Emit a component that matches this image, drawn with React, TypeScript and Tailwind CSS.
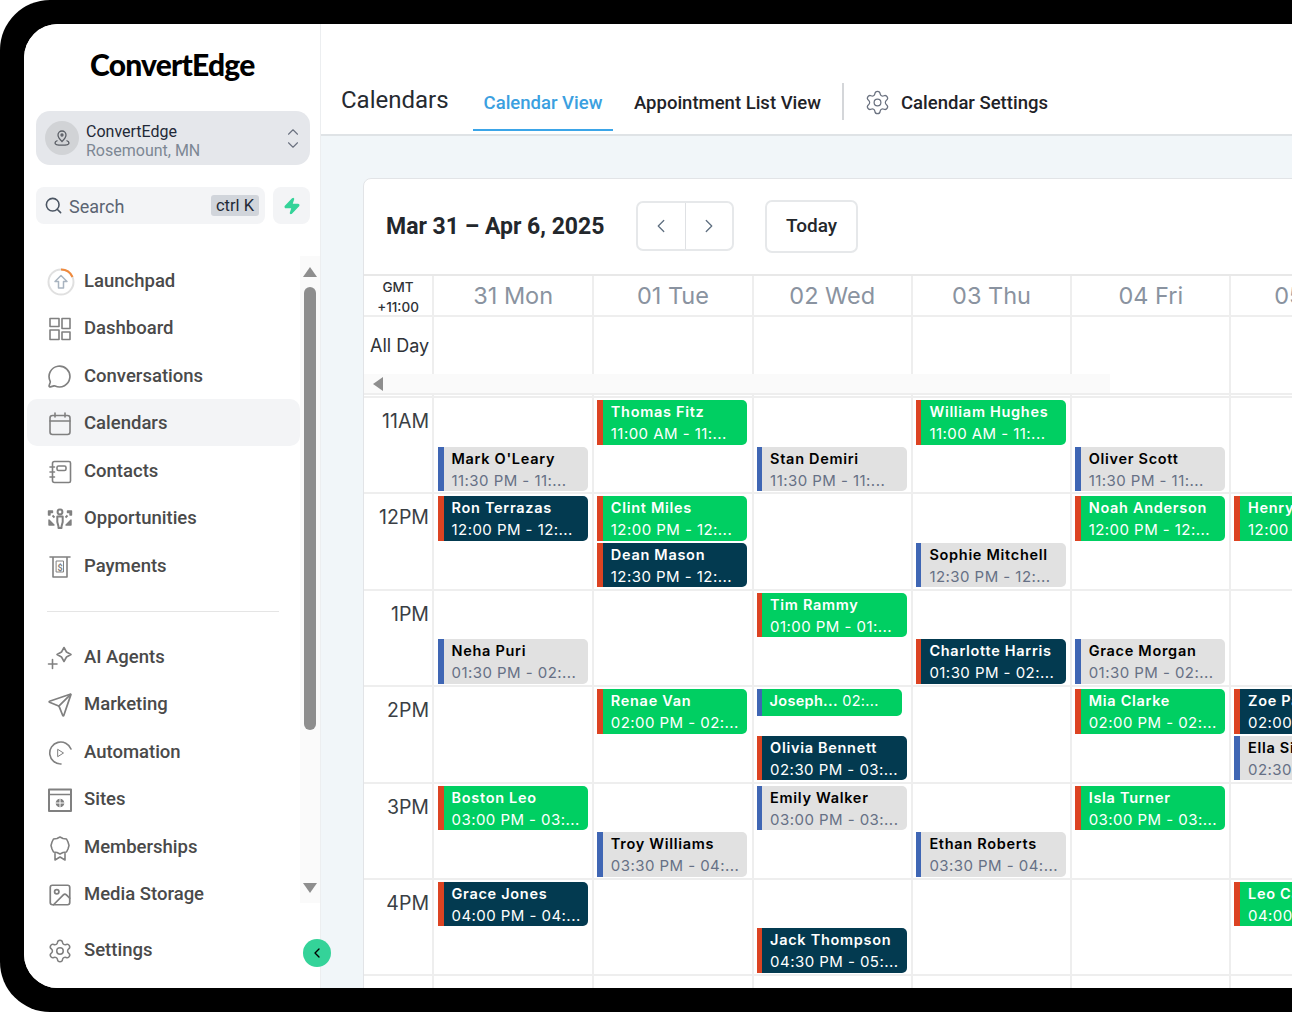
import React from "react";
import { ChevronLeft, ChevronRight, ChevronUp, ChevronDown, Search, Zap, Settings, MessageCircle, Send, Image as ImageIcon } from "lucide-react";

type Kind = "green" | "dark" | "gray" | "short";

type Appt = { row: number; col: number; slot: number; name: string; time: string; kind: Kind };

const days = ["31 Mon", "01 Tue", "02 Wed", "03 Thu", "04 Fri", "05 Sat"];
const hours = ["11AM", "12PM", "1PM", "2PM", "3PM", "4PM"];

// same column widths for every band of the calendar
const GRID = "grid grid-cols-[70px_160.3px_repeat(5,159.3px)]";

const appts: Appt[] = [
  { row: 0, col: 0, slot: 1, name: "Mark O'Leary", time: "11:30 PM - 11:...", kind: "gray" },
  { row: 0, col: 1, slot: 0, name: "Thomas Fitz", time: "11:00 AM - 11:...", kind: "green" },
  { row: 0, col: 2, slot: 1, name: "Stan Demiri", time: "11:30 PM - 11:...", kind: "gray" },
  { row: 0, col: 3, slot: 0, name: "William Hughes", time: "11:00 AM - 11:...", kind: "green" },
  { row: 0, col: 4, slot: 1, name: "Oliver Scott", time: "11:30 PM - 11:...", kind: "gray" },
  { row: 1, col: 0, slot: 0, name: "Ron Terrazas", time: "12:00 PM - 12:...", kind: "dark" },
  { row: 1, col: 1, slot: 0, name: "Clint Miles", time: "12:00 PM - 12:...", kind: "green" },
  { row: 1, col: 1, slot: 1, name: "Dean Mason", time: "12:30 PM - 12:...", kind: "dark" },
  { row: 1, col: 3, slot: 1, name: "Sophie Mitchell", time: "12:30 PM - 12:...", kind: "gray" },
  { row: 1, col: 4, slot: 0, name: "Noah Anderson", time: "12:00 PM - 12:...", kind: "green" },
  { row: 1, col: 5, slot: 0, name: "Henry Scott", time: "12:00 PM - 12:...", kind: "green" },
  { row: 2, col: 0, slot: 1, name: "Neha Puri", time: "01:30 PM - 02:...", kind: "gray" },
  { row: 2, col: 2, slot: 0, name: "Tim Rammy", time: "01:00 PM - 01:...", kind: "green" },
  { row: 2, col: 3, slot: 1, name: "Charlotte Harris", time: "01:30 PM - 02:...", kind: "dark" },
  { row: 2, col: 4, slot: 1, name: "Grace Morgan", time: "01:30 PM - 02:...", kind: "gray" },
  { row: 3, col: 1, slot: 0, name: "Renae Van", time: "02:00 PM - 02:...", kind: "green" },
  { row: 3, col: 2, slot: 0, name: "Joseph...", time: "02:...", kind: "short" },
  { row: 3, col: 2, slot: 1, name: "Olivia Bennett", time: "02:30 PM - 03:...", kind: "dark" },
  { row: 3, col: 4, slot: 0, name: "Mia Clarke", time: "02:00 PM - 02:...", kind: "green" },
  { row: 3, col: 5, slot: 0, name: "Zoe Parker", time: "02:00 PM - 02:...", kind: "dark" },
  { row: 3, col: 5, slot: 1, name: "Ella Simmons", time: "02:30 PM - 03:...", kind: "gray" },
  { row: 4, col: 0, slot: 0, name: "Boston Leo", time: "03:00 PM - 03:...", kind: "green" },
  { row: 4, col: 1, slot: 1, name: "Troy Williams", time: "03:30 PM - 04:...", kind: "gray" },
  { row: 4, col: 2, slot: 0, name: "Emily Walker", time: "03:00 PM - 03:...", kind: "gray" },
  { row: 4, col: 3, slot: 1, name: "Ethan Roberts", time: "03:30 PM - 04:...", kind: "gray" },
  { row: 4, col: 4, slot: 0, name: "Isla Turner", time: "03:00 PM - 03:...", kind: "green" },
  { row: 5, col: 0, slot: 0, name: "Grace Jones", time: "04:00 PM - 04:...", kind: "dark" },
  { row: 5, col: 2, slot: 1, name: "Jack Thompson", time: "04:30 PM - 05:...", kind: "dark" },
  { row: 5, col: 5, slot: 0, name: "Leo Carter", time: "04:00 PM - 04:...", kind: "green" },
];

const cardStyles: Record<Exclude<Kind, "short">, { box: string; bar: string; name: string; time: string }> = {
  green: { box: "bg-[#00cf62]", bar: "bg-[#dc4322]", name: "text-white", time: "text-white" },
  dark: { box: "bg-[#033a50]", bar: "bg-[#dc4322]", name: "text-white", time: "text-white" },
  gray: { box: "bg-[#e1e1e1]", bar: "bg-[#3f66b4]", name: "text-black", time: "text-[#667085]" },
};

function Ico({ children }: { children: React.ReactNode }) {
  return (
    <svg width="26" height="26" viewBox="0 0 26 26" fill="none" stroke="#808080" strokeWidth="1.6" strokeLinecap="round" strokeLinejoin="round">
      {children}
    </svg>
  );
}

const LaunchpadIcon = () => (
  <svg width="28" height="28" viewBox="0 0 28 28" fill="none">
    <circle cx="14" cy="14" r="12.5" stroke="#e0e0e0" strokeWidth="2" />
    <path d="M14 1.5A12.5 12.5 0 0 1 25.5 9" stroke="#f08a3c" strokeWidth="2" />
    <path d="M14 7.5L8 13.5h3.5V20h5v-6.5H20z" stroke="#a9b4c0" strokeWidth="1.5" strokeLinejoin="round" />
  </svg>
);

const DashboardIcon = () => (
  <Ico>
    <rect x="3" y="2.5" width="9" height="8" />
    <rect x="15" y="2.5" width="8" height="10" />
    <rect x="3" y="14" width="9" height="9.5" />
    <rect x="15" y="16" width="8" height="7.5" />
  </Ico>
);

const CalendarIcon = () => (
  <Ico>
    <rect x="3" y="4.5" width="20" height="19" rx="2.5" />
    <path d="M3 10h20M8 2v4M18 2v4" />
  </Ico>
);

const ContactsIcon = () => (
  <Ico>
    <path d="M5.5 4.5a2 2 0 0 1 2-2H22a1.5 1.5 0 0 1 1.5 1.5v18a1.5 1.5 0 0 1-1.5 1.5H7.5a2 2 0 0 1-2-2z" />
    <rect x="10" y="7" width="9" height="4.5" rx="1.5" />
    <path d="M3 8h4.5M3 13h4.5M3 18h4.5" />
  </Ico>
);

const OpportunitiesIcon = () => (
  <svg width="26" height="26" viewBox="0 0 26 26" fill="#808080" stroke="#808080" strokeWidth="1.4" strokeLinejoin="round">
    <circle cx="13" cy="6" r="2.4" fill="none" strokeWidth="2" />
    <path d="M10.3 10.5h5.4v5.5l-1.2 4.5v1.5h-3v-1.5l-1.2-4.5z" fill="none" strokeWidth="2" />
    <path d="M1.5 5h4v1.5h-2.5v2.5h-1.5zM24.500 5h-4v1.500h2.500v2.500h1.500z" />
    <path d="M2 14v5h5zM24 14v5h-5z" />
    <path d="M5.5 9.5l2 2M20.500 9.500l-2 2" strokeWidth="1.8" />
  </svg>
);

const PaymentsIcon = () => (
  <Ico>
    <path d="M3 3h20M6 3v20h14V3" />
    <rect x="9.5" y="7" width="7" height="11" strokeWidth="1" />
    <text x="13" y="16.5" fontSize="9" fontWeight="700" textAnchor="middle" fill="#808080" stroke="none" fontFamily="Roboto, sans-serif">$</text>
  </Ico>
);

const AgentsIcon = () => (
  <Ico>
    <path d="M17 2.5l2.5 4.5 4.5 2.5-4.5 2.5-2.5 4.5-2.5-4.5-4.5-2.5 4.5-2.5z" />
    <path d="M5.5 14.5v9M1.5 19h8.5" />
  </Ico>
);

const AutomationIcon = () => (
  <Ico>
    <path d="M14 24a11 11 0 1 1 10-15" />
    <path d="M11 9.5l5.5 3.5-5.5 3.5z" strokeWidth="1" />
  </Ico>
);

const SitesIcon = () => (
  <Ico>
    <rect x="2" y="2.5" width="22" height="21.5" strokeWidth="2" />
    <path d="M2 7.5h22" />
    <circle cx="13" cy="16" r="4.3" fill="#808080" stroke="none" />
    <path d="M8.7 16h8.6M13 11.7v8.6" stroke="#fff" strokeWidth="1" />
  </Ico>
);

const MembershipIcon = () => (
  <Ico>
    <path d="M13 2l3 1.5 3.5.5 1.5 3 1 3.5-1 3.5-1.5 3-3.5.5-3 1.5-3-1.5-3.5-.5-1.5-3-1-3.5 1-3.5 1.5-3 3.5-.5z" />
    <path d="M8 18.500V25l5-3 5 3v-6.500" />
  </Ico>
);

function Item({ icon, label, active }: { icon: React.ReactNode; label: string; active?: boolean }) {
  return (
    <div className={`flex items-center h-[47.5px] pl-[20px] pt-[4px] rounded-[10px] ${active ? "bg-[#f3f4f6]" : ""}`}>
      <span className="w-[37px] flex-none flex items-center">{icon}</span>
      <span className="text-[18.5px] font-medium text-[#4a4a4a] [font-family:Roboto,sans-serif]">{label}</span>
    </div>
  );
}

function Sidebar() {
  return (
    <aside className="relative w-[297px] flex-none flex flex-col border-r border-[#eceef0] bg-white [font-family:Roboto,sans-serif]">
      {/* logo, real text */}
      <div className="h-[87px] pt-[21px] pl-[66px] text-[30px] leading-[38px] font-black tracking-[-0.8px] text-black [font-family:Lato,sans-serif]">
        ConvertEdge
      </div>

      {/* account switcher */}
      <div className="ml-[12px] mr-[10px] h-[54px] rounded-[14px] bg-[#e5e7eb] flex items-center pl-[9px] pr-[11px]">
        <span className="w-[34px] h-[34px] rounded-full bg-[#d1d3d6] flex items-center justify-center flex-none">
          <svg width="20" height="20" viewBox="0 0 20 20" fill="none" stroke="#5b5f66" strokeWidth="1.3">
            <path d="M10 3a4 4 0 0 0-4 4c0 2.8 4 6.5 4 6.5s4-3.7 4-6.5a4 4 0 0 0-4-4z" />
            <circle cx="10" cy="7" r="1" />
            <path d="M5.5 12.5C3.5 13.3 3 14.3 3 15c0 1.3 3 2.2 7 2.2s7-.9 7-2.2c0-.7-.5-1.700-2.500-2.500" />
          </svg>
        </span>
        <div className="ml-[7px] pt-[5px] flex-1 min-w-0">
          <div className="text-[16px] leading-[19px] text-[#1f2937]">ConvertEdge</div>
          <div className="text-[16px] leading-[19px] text-[#7d8794]">Rosemount, MN</div>
        </div>
        <div className="flex flex-col text-[#6b7280] -space-y-[5px] -mr-[3px]">
          <ChevronUp size={18} strokeWidth={1.5} />
          <ChevronDown size={18} strokeWidth={1.5} />
        </div>
      </div>

      {/* search */}
      <div className="mt-[22px] ml-[12px] mr-[10px] flex gap-[8px]">
        <div className="w-[229px] h-[37px] rounded-[8px] bg-[#f3f4f6] flex items-center pl-[8px] pr-[6px]">
          <Search size={19} className="text-[#4b5563]" />
          <span className="ml-[6px] pt-[2px] flex-1 text-[18px] text-[#5b6472]">Search</span>
          <span className="h-[21px] w-[48px] rounded-[3px] bg-[#d1d5db] text-[16.5px] leading-[22px] text-center text-[#1f2937]">ctrl K</span>
        </div>
        <div className="w-[37px] h-[37px] rounded-[8px] bg-[#f3f4f6] flex items-center justify-center">
          <Zap size={18} className="text-[#34d399] fill-[#34d399]" />
        </div>
      </div>

      {/* nav + scrollbar */}
      <div className="mt-[32px] flex h-[647px]">
        <nav className="flex-1 min-w-0 pl-[3px]">
          <Item icon={<LaunchpadIcon />} label="Launchpad" />
          <Item icon={<DashboardIcon />} label="Dashboard" />
          <Item icon={<MessageCircle size={25} color="#808080" strokeWidth={1.6} />} label="Conversations" />
          <Item icon={<CalendarIcon />} label="Calendars" active />
          <Item icon={<ContactsIcon />} label="Contacts" />
          <Item icon={<OpportunitiesIcon />} label="Opportunities" />
          <Item icon={<PaymentsIcon />} label="Payments" />
          <div className="ml-[20px] mt-[22px] mb-[20.5px] h-[1px] bg-[#e5e5e5] w-[232px]" />
          <Item icon={<AgentsIcon />} label="AI Agents" />
          <Item icon={<Send size={26} color="#808080" strokeWidth={1.6} />} label="Marketing" />
          <Item icon={<AutomationIcon />} label="Automation" />
          <Item icon={<SitesIcon />} label="Sites" />
          <Item icon={<MembershipIcon />} label="Memberships" />
          <Item icon={<ImageIcon size={26} color="#808080" strokeWidth={1.6} />} label="Media Storage" />
        </nav>
        <div className="w-[20px] flex-none bg-[#fafafa] flex flex-col items-center pt-[11px] pb-[10px]">
          <span className="w-0 h-0 border-x-[7px] border-x-transparent border-b-[10px] border-b-[#8e8e8e]" />
          <span className="mt-[10px] w-[12px] h-[443px] rounded-full bg-[#8e8e8e]" />
          <span className="mt-auto w-0 h-0 border-x-[7px] border-x-transparent border-t-[10px] border-t-[#8e8e8e]" />
        </div>
      </div>

      <div className="mt-[22px] w-[276px] pl-[3px]">
        <Item icon={<Settings size={26} color="#808080" strokeWidth={1.4} />} label="Settings" />
      </div>

      {/* collapse */}
      <button className="absolute left-[279px] top-[915px] w-[28px] h-[28px] rounded-full bg-[#34d399] flex items-center justify-center text-black z-10">
        <ChevronLeft size={16} />
      </button>
    </aside>
  );
}

function Header() {
  return (
    <header className="h-[112px] flex-none bg-white border-b-2 border-[#dfe3e6] flex items-end pl-[20px] [font-family:Roboto,sans-serif]">
      <div className="h-[107px] flex items-end w-full pb-[3px]">
        <div className="text-[24px] leading-[30px] text-[#262a30] pb-[16px] w-[132px]">Calendars</div>
        <div className="w-[140px] h-[48px] border-b-2 border-[#3ba5e8] text-center text-[18.5px] font-medium leading-[26px] text-[#3ba0e0] pt-[6.5px]">
          Calendar View
        </div>
        <div className="ml-[21px] w-[188px] h-[48px] text-[18.5px] font-medium leading-[26px] text-[#1f2328] pt-[6.5px] whitespace-nowrap">
          Appointment List View
        </div>
        <div className="ml-[20px] w-[2px] h-[37px] bg-[#d4d6d9] mb-[11px]" />
        <div className="ml-[20px] h-[48px] flex items-start pt-[6px] text-[18.5px] font-medium leading-[26px] text-[#1f2328] gap-[10px] whitespace-nowrap">
          <Settings size={27} color="#6b7280" strokeWidth={1.1} />
          <span className="pt-[0.5px]">Calendar Settings</span>
        </div>
      </div>
    </header>
  );
}

function EventCard({ a }: { a: Appt }) {
  if (a.kind === "short") {
    return (
      <div className="w-[145px] h-[27px] rounded-r-[5px] bg-[#00cf62] flex overflow-hidden">
        <span className="w-[5px] flex-none bg-[#3f66b4]" />
        <div className="pl-[8px] text-[14.5px] leading-[23px] tracking-[0.3px] text-white whitespace-nowrap">
          <span className="font-semibold">{a.name}</span> {a.time}
        </div>
      </div>
    );
  }
  const s = cardStyles[a.kind];
  return (
    <div className={`w-[150px] h-[44.5px] rounded-r-[5px] flex overflow-hidden ${s.box}`}>
      <span className={`w-[5.5px] flex-none ${s.bar}`} />
      <div className="pl-[8px] pt-[1px] min-w-0 whitespace-nowrap">
        <div className={`text-[14.5px] leading-[22px] font-semibold tracking-[0.7px] ${s.name}`}>{a.name}</div>
        <div className={`text-[15px] leading-[22px] tracking-[0.45px] ${s.time}`}>{a.time}</div>
      </div>
    </div>
  );
}

function CalendarGrid() {
  const find = (row: number, col: number, slot: number) =>
    appts.find((a) => a.row === row && a.col === col && a.slot === slot);

  return (
    <div className="[font-family:Inter,sans-serif]">
      {/* day header */}
      <div className={`${GRID} border-t-2 border-[#e8e8e8]`}>
        <div className="h-[41px] border-r-2 border-b-2 border-[#eeeeee] text-center text-[13.5px] leading-[20px] font-medium text-[#2f3338] pt-[1px]">
          GMT
          <br />
          +11:00
        </div>
        {days.map((d) => (
          <div key={d} className="h-[41px] border-r-2 border-b-2 border-[#eeeeee] text-center text-[23.5px] leading-[40px] text-[#8a93a0] whitespace-nowrap">
            {d}
          </div>
        ))}
      </div>

      {/* all day, horizontal scrollbar lies over it */}
      <div className={`relative ${GRID} border-b-2 border-[#eeeeee]`}>
        <div className="h-[76px] border-r-2 border-[#eeeeee] text-[18px] leading-[58px] pl-[6px] text-[#2f3338]">All Day</div>
        {days.map((d) => (
          <div key={d} className="h-[76px] border-r-2 border-[#eeeeee]" />
        ))}
        <div className="absolute left-0 top-[57px] w-[746px] h-[19px] bg-[#fafafa] flex items-center pl-[9px] pt-[1px]">
          <span className="w-0 h-0 border-y-[7px] border-y-transparent border-r-[10px] border-r-[#8e8e8e]" />
        </div>
      </div>
      <div className={`${GRID} border-b-2 border-[#eeeeee]`}>
        <div className="h-[1px] border-r-2 border-[#eeeeee]" />
        {days.map((d) => (
          <div key={d} className="h-[1px] border-r-2 border-[#eeeeee]" />
        ))}
      </div>

      {/* time grid */}
      <div className={`${GRID} auto-rows-[96.4px]`}>
        {hours.map((h, row) => (
          <React.Fragment key={h}>
            <div className="border-r-2 border-b-2 border-[#eeeeee] text-right pr-[3px] pt-[9px] text-[19.5px] leading-[28px] text-[#3a3f45]">{h}</div>
            {days.map((d, col) => (
              <div key={d} className={`border-r-2 border-b-2 border-[#eeeeee] ${col === 0 ? "pl-[4px]" : "pl-[3px]"}`}>
                <div className="h-[48px] pt-[2px]">{find(row, col, 0) && <EventCard a={find(row, col, 0)!} />}</div>
                <div className="h-[46px] pt-[0.5px]">{find(row, col, 1) && <EventCard a={find(row, col, 1)!} />}</div>
              </div>
            ))}
          </React.Fragment>
        ))}
      </div>
      <div className={GRID}>
        <div className="h-[20px] border-r-2 border-[#eeeeee]" />
        {days.map((d) => (
          <div key={d} className="h-[20px] border-r-2 border-[#eeeeee]" />
        ))}
      </div>
    </div>
  );
}

export default function App() {
  return (
    <div className="w-[1292px] h-[1012px] bg-white overflow-hidden">
      <div className="w-[1420px] h-full bg-black rounded-[50px] p-[24px]">
        <div className="flex h-full bg-white rounded-[34px] overflow-hidden">
          <Sidebar />
          <main className="flex-1 min-w-0 bg-[#f1f6f9] overflow-hidden">
            <Header />
            <div className="ml-[42px] mt-[42px] bg-white border border-[#e2e4e7] rounded-tl-[8px] h-[900px]">
              <div className="h-[95px] flex items-center pl-[22px] [font-family:Roboto,sans-serif]">
                <div className="w-[250px] mt-[2px] text-[23px] font-bold text-[#23272c] whitespace-nowrap">Mar 31 – Apr 6, 2025</div>
                <div className="w-[98px] h-[50px] mb-[2px] rounded-[7px] border-2 border-[#e6e8ea] flex text-[#5f6f80]">
                  <span className="flex-1 flex items-center justify-center border-r border-[#dfe1e4]">
                    <ChevronLeft size={22} strokeWidth={1.4} />
                  </span>
                  <span className="flex-1 flex items-center justify-center">
                    <ChevronRight size={22} strokeWidth={1.4} />
                  </span>
                </div>
                <div className="ml-[31px] w-[93px] h-[53px] rounded-[7px] border-2 border-[#e6e8ea] flex items-center justify-center text-[19px] font-medium text-[#23272c]">
                  Today
                </div>
              </div>
              <CalendarGrid />
            </div>
          </main>
        </div>
      </div>
    </div>
  );
}
